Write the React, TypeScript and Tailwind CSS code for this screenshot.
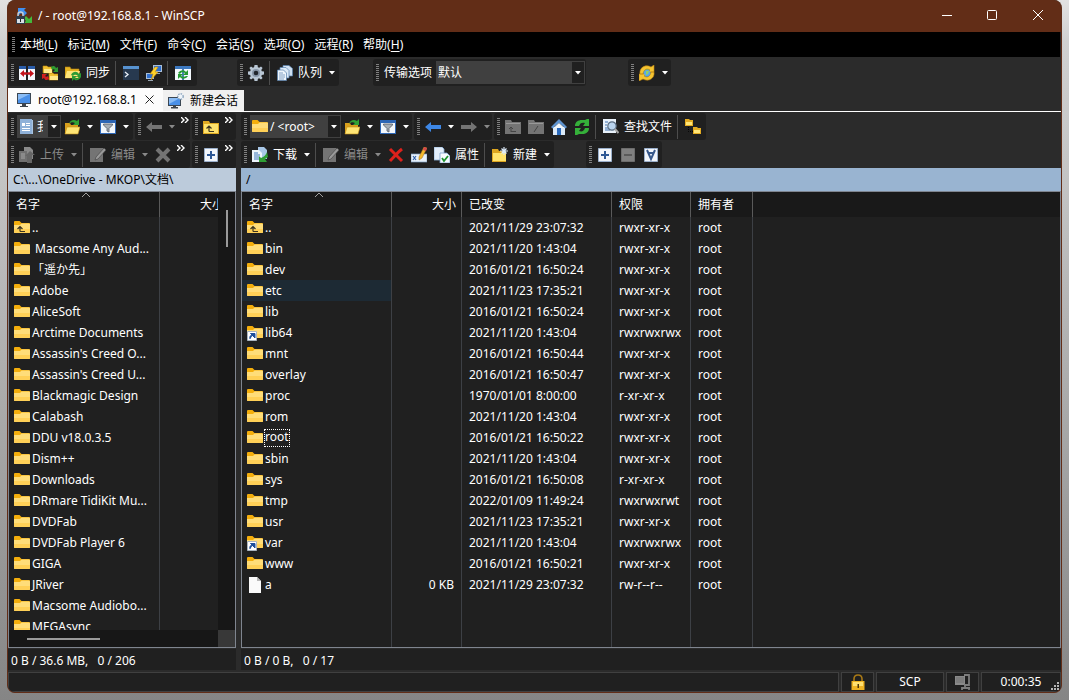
import type { ReactNode } from "react";

const localFiles = [
  "..",
  " Macsome Any Aud...",
  "「遥か先」",
  "Adobe",
  "AliceSoft",
  "Arctime Documents",
  "Assassin's Creed O...",
  "Assassin's Creed U...",
  "Blackmagic Design",
  "Calabash",
  "DDU v18.0.3.5",
  "Dism++",
  "Downloads",
  "DRmare TidiKit Mu...",
  "DVDFab",
  "DVDFab Player 6",
  "GIGA",
  "JRiver",
  "Macsome Audiobo...",
  "MEGAsync",
];

// name, size, changed, rights
const remoteFiles = [
  ["..", "", "2021/11/29 23:07:32", "rwxr-xr-x"],
  ["bin", "", "2021/11/20 1:43:04", "rwxr-xr-x"],
  ["dev", "", "2016/01/21 16:50:24", "rwxr-xr-x"],
  ["etc", "", "2021/11/23 17:35:21", "rwxr-xr-x"],
  ["lib", "", "2016/01/21 16:50:24", "rwxr-xr-x"],
  ["lib64", "", "2021/11/20 1:43:04", "rwxrwxrwx"],
  ["mnt", "", "2016/01/21 16:50:44", "rwxr-xr-x"],
  ["overlay", "", "2016/01/21 16:50:47", "rwxr-xr-x"],
  ["proc", "", "1970/01/01 8:00:00", "r-xr-xr-x"],
  ["rom", "", "2021/11/20 1:43:04", "rwxr-xr-x"],
  ["root", "", "2016/01/21 16:50:22", "rwxr-xr-x"],
  ["sbin", "", "2021/11/20 1:43:04", "rwxr-xr-x"],
  ["sys", "", "2016/01/21 16:50:08", "r-xr-xr-x"],
  ["tmp", "", "2022/01/09 11:49:24", "rwxrwxrwt"],
  ["usr", "", "2021/11/23 17:35:21", "rwxr-xr-x"],
  ["var", "", "2021/11/20 1:43:04", "rwxrwxrwx"],
  ["www", "", "2016/01/21 16:50:21", "rwxr-xr-x"],
  ["a", "0 KB", "2021/11/29 23:07:32", "rw-r--r--"],
];

const menus = [
  ["本地", "L"],
  ["标记", "M"],
  ["文件", "F"],
  ["命令", "C"],
  ["会话", "S"],
  ["选项", "O"],
  ["远程", "R"],
  ["帮助", "H"],
];

const icons: Record<string, ReactNode> = {
  compare: (
    <>
      <path d="M0 1h7v14H0zM9 1h7v14H9z" fill="#f4f8fd" />
      <path d="M0 1h7v3H0zM9 1h7v3H9z" fill="#2a5ca8" />
      <path d="M1 8.500l4-3.500v2.500h2v2H5V12zM15 8.500L11 5v2.500H9v2h2V12z" fill="#c4121c" />
      <path d="M5 7.500h6v2H5z" fill="#c4121c" />
    </>
  ),
  mirror: (
    <>
      <path d="M1 1h4l1 1h4v6H1zM7 8h4l1 1h4v6H7z" fill="#f0c030" stroke="#c08a10" strokeWidth=".6" />
      <path d="M2 4h8v4H2zM8 11h8v4H8z" fill="#ffe987" />
      <path d="M9 2c3-2 4-1 5 1l2-1v5h-5l2-2c-1-1-2-1-3 0z" fill="#2f9a30" />
      <path d="M7 14c-3 2-4 1-5-1l-2 1V9h5l-2 2c1 1 2 1 3 0z" fill="#d02020" />
    </>
  ),
  sync: (
    <>
      <path d="M0 2h5l1 2h8v9H0z" fill="#e6b422" stroke="#b98512" strokeWidth=".6" />
      <path d="M2 6h13l-2 7H0z" fill="#ffe579" />
      <path d="M6 10c2-4 6-4 8-1l2-1v4h-5l2-1c-2-2-4-1-5 0zM16 12c-2 4-6 4-7 2l-2 2v-5h5l-2 2c2 1 3 0 4-1z" fill="#2c9b35" />
    </>
  ),
  terminal: (
    <>
      <path d="M0 1h16v14H0z" fill="#27394f" />
      <path d="M0 1h16v3H0z" fill="#5792cf" />
      <path d="M2 7l3 2.500L2 12" fill="none" stroke="#e8eef6" strokeWidth="1.300" />
    </>
  ),
  putty: (
    <>
      <path d="M7 0h9v7H7zM0 8h8v6H0z" fill="#a8bfd8" />
      <path d="M8 1h7v5H8zM1 9h6v4H1z" fill="#2f6fcf" />
      <path d="M10 8h4v1h-4zM2 15h5v1H2z" fill="#9aa6b3" />
      <path d="M9 2L4 9h3l-2 6 7-8H9l3-5z" fill="#ffd42a" stroke="#c18a10" strokeWidth=".6" />
    </>
  ),
  keep: (
    <>
      <path d="M0 1h16v14H0z" fill="#f3f8fd" />
      <path d="M0 1h16v3H0z" fill="#3c78bf" />
      <path d="M7 4h2v11H7z" fill="#4a7fbd" />
      <path d="M3 8c2-3 6-4 8-1l2-2v5H8l2-2C8 7 6 7 5 9zM13 11c-2 3-6 4-8 1l-2 2V9h5l-2 2c2 1 4 1 5 0z" fill="#259a32" />
    </>
  ),
  gear: (
    <>
      <path d="M6.500 0h3l.4 2.200 1.300.6L13 1.400 14.600 3l-1.300 1.900.5 1.300 2.200.4v2.800l-2.200.5-.5 1.300 1.300 1.800-1.600 1.600-1.800-1.300-1.300.5-.4 2.200h-3l-.4-2.200-1.300-.5L3 14.600 1.400 13l1.300-1.800-.5-1.300L0 9.400V6.600l2.200-.4.5-1.300L1.400 3 3 1.400l1.800 1.400 1.300-.6z" fill="#b8c6d4" />
      <circle cx="8" cy="8" r="4" fill="#8796a8" />
      <circle cx="8" cy="8" r="2.300" fill="#20252c" />
    </>
  ),
  queue: (
    <g stroke="#5680ad" strokeWidth=".7">
      <path d="M6 .5h6l3.500 3V11H6z" fill="#cfe0f2" />
      <path d="M3 2.500h6l3 3V13H3z" fill="#dceaf7" />
      <path d="M.5 5h6l3 3v7.500h-9z" fill="#eef6fd" />
      <path d="M2 8h4M2 10h6M2 12h6M2 14h5" />
    </g>
  ),
  globe: (
    <>
      <circle cx="8" cy="8" r="6.500" fill="#3f8fe0" />
      <path d="M6 5l3-1 2 3-3 2-2 3-1-3z" fill="#7ec95b" />
      <path d="M1 9C0 2 7-1 12 2l3-2v7H9l2-2C8 3 5 4 4 9zM15 7c1 7-6 10-11 7l-4 2V9h7l-2 2c3 2 6 1 7-4z" fill="#f5c431" stroke="#bd8512" strokeWidth=".6" />
      <circle cx="8" cy="8" r="3" fill="#5aa6ec" />
      <path d="M7 6l3 0-1 3-2 1z" fill="#8fd06b" />
    </>
  ),
  monitor: (
    <>
      <path d="M1 1h14v11H1z" fill="#3b4754" />
      <path d="M2 2h12v9H2z" fill="#4a90e8" />
      <path d="M2 2h12L2 8z" fill="#8abcf5" />
      <path d="M6 12h4v2h2v1H4v-1h2z" fill="#3d444c" />
    </>
  ),
  newSession: (
    <>
      <path d="M0 4h13v9H0z" fill="#3b4754" />
      <path d="M1 5h11v7H1z" fill="#4a90e8" />
      <path d="M1 5h11L1 11z" fill="#8abcf5" />
      <path d="M5 13h3v1h2v1.500H3V14h2z" fill="#3d444c" />
      <circle cx="12.500" cy="3.500" r="2.700" fill="#eef4fa" stroke="#8ba4bd" strokeDasharray="1.500 1" strokeWidth="1.400" />
    </>
  ),
  docs: (
    <>
      <path d="M2 1h12v14H2z" fill="#a9c4e2" />
      <path d="M1 0h12v15H1z" fill="#8fb1d8" />
      <path d="M3 4h3v3H3zM7 4h4v1H7zM7 6h4v1H7zM3 9h8v1H3zM3 11h8v1H3z" fill="#fff" />
    </>
  ),
  open: (
    <>
      <path d="M1 4h5l1 2h7v9H1z" fill="#d99f1c" />
      <path d="M3 8h13l-2 7H1z" fill="#ffe574" stroke="#c58f18" strokeWidth=".6" />
      <path d="M5 5c1-4 5-5 8-3l2-2v6H9l2-2C9 3 7 3 5 5z" fill="#31a034" />
    </>
  ),
  filter: (
    <>
      <path d="M0 1h16v14H0z" fill="#2d66b5" />
      <path d="M1 4h14v10H1z" fill="#f2f7fc" />
      <path d="M3.500 5h9v1L9 9.500V13l-2-1V9.500L3.500 6z" fill="#a7aeb6" stroke="#50575f" strokeWidth=".8" />
    </>
  ),
  back: <path d="M0 8l6-5v3h10v4H6v3z" fill="#3d87e6" />,
  backOff: <path d="M0 8l6-5v3h10v4H6v3z" fill="#747474" />,
  forward: <path d="M16 8l-6-5v3H0v4h10v3z" fill="#747474" />,
  parent: (
    <>
      <path d="M0 2h6l1 2h9v11H0z" fill="#e0aa23" />
      <path d="M1 5h14v9H1z" fill="#ffe36c" />
      <path d="M6 12.500V8M3.500 9.500L6 7l2.500 2.500M6 12.500h5" fill="none" stroke="#3b3420" strokeWidth="1.200" />
    </>
  ),
  parentOff: (
    <>
      <path d="M0 1h6l1 2h9v12H0z" fill="#747474" />
      <path d="M1 4.500h14" stroke="#999" />
      <path d="M6 13V8M4 10l2-2 2 2M6 12.500h5" fill="none" stroke="#444" />
    </>
  ),
  rootOff: (
    <>
      <path d="M0 1h6l1 2h9v12H0z" fill="#747474" />
      <path d="M1 4.500h14" stroke="#999" />
      <path d="M6 13l4-6" stroke="#444" />
    </>
  ),
  home: (
    <>
      <path d="M2 8h12v8H2z" fill="#dceaf8" />
      <path d="M8 0l8 8-1.500 1.500L8 4 1.500 9.500 0 8z" fill="#5e93cf" />
      <path d="M8 4l5 4.500V9H3v-.5z" fill="#eff6fc" />
      <path d="M6 9h4v7H6z" fill="#2869bd" />
    </>
  ),
  refresh: (
    <path d="M1 7C1 3 4 1 8 1h3l2-1h2v7H9l2-3C8 3 6 4 5 7zM15 9c0 4-3 6-7 6H5l-2 1H1V9h6l-2 3c3 1 5 0 6-3z" fill="#35b03a" />
  ),
  find: (
    <>
      <path d="M0 0h13v14H0z" fill="#e8f1fa" />
      <path d="M2 3h3M2 6h2M2 9h3M2 11h5" stroke="#3d71ad" strokeWidth="1.200" />
      <circle cx="9" cy="7" r="4.200" fill="#b9d4ee" stroke="#5c6f83" strokeWidth="1.200" />
      <path d="M12 10l3.500 4" stroke="#a8a8a8" strokeWidth="2" />
    </>
  ),
  tree: (
    <>
      <path d="M0 0h4l1 1h3v6H0zM8 8h4l1 1h3v6H8z" fill="#e4ac22" />
      <path d="M1 3h6v3H1zM9 11h6v3H9z" fill="#ffe678" />
      <path d="M3.500 8v4.500H8" fill="none" stroke="#000" strokeDasharray="1 1" />
    </>
  ),
  upload: (
    <>
      <path d="M5 0h6l3 3v9H5z" fill="#8a8a8a" />
      <path d="M0 4h8v11H0z" fill="#707070" />
      <path d="M2 7h4M2 9h4M2 11h4" stroke="#a5a5a5" />
      <path d="M8 16V9H6l5-5 5 4h-3v8z" fill="#666" />
    </>
  ),
  download: (
    <>
      <path d="M6 0h6l3 3v9H6z" fill="#a9c8e8" />
      <path d="M0 3h7l3 3v9H0z" fill="#edf5fc" />
      <path d="M2 6h4M2 8h6M2 10h5M2 12h5" stroke="#3d78bd" />
      <path d="M15 5l1 5-3 2 2 3H7V9l2 2c3-1 5-3 6-6z" fill="#2f9f36" />
    </>
  ),
  editOff: (
    <>
      <path d="M0 1h13v14H0z" fill="#747474" />
      <path d="M14 1l2 2-8 9-3 1 1-3z" fill="#999" stroke="#4a4a4a" strokeWidth=".7" />
    </>
  ),
  deleteOff: <path d="M2 2l12 12M14 2L2 14" stroke="#737373" strokeWidth="4" />,
  delete: <path d="M2 2c4 4 8 8 12 12M14 2C10 5 6 10 2 14" fill="none" stroke="#dc211c" strokeWidth="3" />,
  rename: (
    <>
      <path d="M0 7h16v8H0z" fill="#e8f1fa" stroke="#7fa0c4" strokeWidth=".7" />
      <path d="M2 9l3 4M5 9l-3 4" stroke="#2f5fa8" strokeWidth="1.200" />
      <path d="M13 0l3 1-5 10-3 2v-3z" fill="#f4b92b" stroke="#a36d14" strokeWidth=".5" />
      <path d="M13 0l3 1-1 3-3-1z" fill="#d6474d" />
    </>
  ),
  props: (
    <>
      <path d="M0 0h8l2 2v11H0z" fill="#e3eefa" stroke="#8aaed5" strokeWidth=".8" />
      <path d="M6 6h7l3 3v7H6z" fill="#f8fbff" stroke="#7aa0ca" strokeWidth=".8" />
      <path d="M8 11l2 3 4-5" fill="none" stroke="#1f9430" strokeWidth="1.800" />
    </>
  ),
  newFolder: (
    <>
      <path d="M0 2h6l1 2h7v11H0z" fill="#dda51f" />
      <path d="M1 6h13v8H1z" fill="#ffe26a" />
      <path d="M12 0v8M8 4h8M9.500 1.500l5 5M14.500 1.500l-5 5" stroke="#dceaf8" strokeWidth="1.200" />
    </>
  ),
  plus: (
    <>
      <path d="M1.500 1.500h13v13h-13z" fill="#f2f6fc" stroke="#9bb0cc" />
      <path d="M8 4v8M4 8h8" stroke="#2d5896" strokeWidth="2" />
    </>
  ),
  minusOff: (
    <>
      <path d="M1.500 1.500h13v13h-13z" fill="#808080" stroke="#6d6d6d" />
      <path d="M4 8h8" stroke="#5a5a5a" strokeWidth="2" />
    </>
  ),
  selectFilter: (
    <>
      <path d="M1.500 1.500h13v13h-13z" fill="#f2f6fc" stroke="#9bb0cc" />
      <path d="M4 3l4 9 4-9M5 6h6" fill="none" stroke="#38598c" strokeWidth="2" />
    </>
  ),
  folder: (
    <>
      <path d="M0 2q0-1 1-1h4.500l2 2H15q1 0 1 1v2H0z" fill="#f4ae0c" />
      <path d="M0 5h6l1.500-1.500H15q1 0 1 1V12q0 1-1 1H1q-1 0-1-1z" fill="#ffdd79" />
      <path d="M0 9h16v3q0 1-1 1H1q-1 0-1-1z" fill="#ffd057" />
    </>
  ),
  app: (
    <>
      <path d="M2 0h8L8 2l3 3-3 3-3-3-3 3z" fill="#3f8ff0" />
      <path d="M16 15H8l2-2-2-3 2-2 3 3 3-3z" fill="#43b83c" />
      <path d="M2 9V6q0-2 2.500-2T7 6v3" fill="none" stroke="#c9cfd6" strokeWidth="1.500" />
      <path d="M0 8h9v8H0z" fill="#303b4a" />
      <path d="M1 11h7v4H1z" fill="#d9dee4" />
      <path d="M4 11h1v3H4z" fill="#222" />
    </>
  ),
  lock: (
    <>
      <path d="M4 8V5q0-4 4-4t4 4v3" fill="none" stroke="#a87916" strokeWidth="1.600" />
      <path d="M1.500 7h13v9h-13z" fill="#efb323" />
      <path d="M3 8h10v4H3z" fill="#ffe070" />
      <path d="M7.500 10h1.500v4H7.500z" fill="#4d3508" />
    </>
  ),
  compress: (
    <>
      <path d="M0 2h10v9H0z" fill="#8a8a8a" />
      <path d="M1 4h8M1 6h8M1 8h8" stroke="#707070" />
      <path d="M9 1h5v10h-5M10 11v4M7 14h8M7 13v3M14 13v3" fill="none" stroke="#7c7c7c" strokeWidth="1.800" />
    </>
  ),
};

function Icon({ name }: { name: string }) {
  return (
    <svg className="h-4 w-4 shrink-0" viewBox="0 0 16 16" aria-hidden="true">
      {icons[name]}
    </svg>
  );
}

function Arrow() {
  return (
    <svg className="h-1 w-[6px] shrink-0" viewBox="0 0 6 4" aria-hidden="true">
      <path d="M0 0h6L3 3.500z" fill="currentColor" />
    </svg>
  );
}

function Band({ children, className = "" }: { children: ReactNode; className?: string }) {
  return (
    <div className={`flex h-[27px] shrink-0 items-center gap-[7px] overflow-hidden rounded-[3px] bg-[#202020] pr-1 pl-[3px] ${className}`}>
      <span className="-mr-[2px] h-[18px] w-[3px] shrink-0 bg-[repeating-linear-gradient(#808080_0_1px,transparent_1px_2px)]" />
      {children}
    </div>
  );
}

type ToolProps = { icon: string; text?: string; arrow?: boolean; off?: boolean; title?: string };

function Tool({ icon, text, arrow, off, title }: ToolProps) {
  return (
    <button
      type="button"
      disabled={off}
      aria-label={text || title || icon}
      className={`flex h-6 shrink-0 items-center ${off ? "text-[#8a8a8a]" : "text-white"}`}
    >
      <Icon name={icon} />
      {text && <span className="pl-[5px] whitespace-nowrap">{text}</span>}
      {arrow && (
        <span className="pl-[7px]">
          <Arrow />
        </span>
      )}
    </button>
  );
}

function Sep() {
  return <span className="-ml-[2px] h-6 w-px shrink-0 bg-[#4d4d4d]" />;
}

function More() {
  return (
    <button type="button" aria-label="more" className="-ml-px h-[14px] w-2 shrink-0 self-start">
      <svg className="h-[6px] w-2" viewBox="0 0 8 6">
        <path d="M0 0l3 3-3 3M4 0l3 3-3 3" fill="none" stroke="#fff" strokeWidth="1.400" />
      </svg>
    </button>
  );
}

function Combo({ icon, value, label, className = "" }: { icon?: string; value: string; label: string; className?: string }) {
  return (
    <div className={`flex h-[23px] shrink-0 items-center bg-[#404040] ${className}`}>
      {icon && (
        <span className="pl-[2px]">
          <Icon name={icon} />
        </span>
      )}
      <div className="relative h-full min-w-0 flex-1">
        <select aria-label={label} className="h-full w-full appearance-none bg-transparent pr-[18px] pl-[2px] text-white outline-none">
          <option>{value}</option>
        </select>
        <span className="pointer-events-none absolute inset-y-px right-px flex w-3 items-center justify-center bg-[#202020]">
          <Arrow />
        </span>
      </div>
    </div>
  );
}

function FileIcon({ name }: { name: string }) {
  if (name === "a")
    return (
      <svg className="h-4 w-4 shrink-0" viewBox="0 0 16 16">
        <path d="M2 0h8l4 4v12H2z" fill="#fafafa" />
        <path d="M10 0l4 4h-4z" fill="#b9b9b9" />
      </svg>
    );
  return (
    <svg className="h-4 w-4 shrink-0" viewBox="0 0 16 16">
      {icons.folder}
      {name === ".." && (
        <path d="M6 11.500V7M3.500 9L6 6.500 8.500 9M6 11.500h5" fill="none" stroke="#3b3420" strokeWidth="1.200" />
      )}
      {(name === "lib64" || name === "var") && (
        <>
          <path d="M.5 6.500h9v9h-9z" fill="#fff" stroke="#a9b4c0" />
          <path d="M3 14q-1-4 3-4M3.500 8.500H8V13z" fill="#1c4f9c" stroke="#1c4f9c" />
        </>
      )}
    </svg>
  );
}

function SortMark() {
  return (
    <svg className="absolute top-0 left-1/2 -ml-[3px] h-[6px] w-[10px]" viewBox="0 0 10 6">
      <path d="M1 5l4-4 4 4" fill="none" stroke="#a0a0a0" />
    </svg>
  );
}

function LocalPanel() {
  return (
    <section className="flex w-[228px] shrink-0 flex-col">
      <div className="h-[23px] truncate bg-[#bccbdb] px-[5px] leading-[23px] text-black">C:\...\OneDrive - MKOP\文档\</div>
      <div className="flex min-h-0 flex-1 flex-col border border-[#7f858f] bg-[#202020]">
        <div className="flex min-h-0 flex-1">
          <div className="min-w-0 flex-1 overflow-hidden">
            <table className="w-[240px] table-fixed border-separate border-spacing-0">
              <thead>
                <tr className="h-[25px] bg-[#191919]">
                  <th className="relative w-[151px] border-r border-[#5a5a5a] p-0 pl-[7px] text-left font-normal">
                    名字
                    <SortMark />
                  </th>
                  <th className="p-0 pl-10 text-left font-normal">大小</th>
                </tr>
              </thead>
              <tbody>
                {localFiles.map((name) => (
                  <tr key={name} className="h-[21px]">
                    <td className="border-r border-[#3d4045] p-0 pl-[5px]">
                      <div className="flex h-[21px] items-center gap-[2px] overflow-hidden whitespace-pre">
                        <FileIcon name={name} />
                        {name}
                      </div>
                    </td>
                    <td />
                  </tr>
                ))}
              </tbody>
            </table>
          </div>
          <div className="flex w-[17px] shrink-0 justify-center bg-[#171717] pt-[18px]">
            <div className="h-[37px] w-[2px] bg-[#9a9a9a]" />
          </div>
        </div>
        <div className="flex h-[17px] shrink-0 items-center bg-[#171717] pl-[18px]">
          <div className="h-[2px] w-[73px] bg-[#9a9a9a]" />
          <div className="ml-auto h-full w-[17px] bg-[#383838]" />
        </div>
      </div>
      <div className="mt-px h-[21px] bg-[#202020] px-[3px] leading-6 whitespace-pre">0 B / 36.6 MB,   0 / 206</div>
    </section>
  );
}

function RemotePanel() {
  return (
    <section className="flex min-w-0 flex-1 flex-col">
      <div className="h-[23px] truncate bg-[#99b4d1] px-[5px] leading-[23px] text-black">/</div>
      <div className="min-h-0 flex-1 border border-[#7f858f] bg-[#202020]">
        <table className="h-full w-full table-fixed border-separate border-spacing-0 whitespace-nowrap">
          <thead>
            <tr className="h-[25px] bg-[#191919] text-left [&>th]:border-r [&>th]:border-[#5a5a5a] [&>th]:p-0 [&>th]:font-normal">
              <th className="relative w-[150px] pl-[7px]!">
                <span className="block">名字</span>
                <SortMark />
              </th>
              <th className="w-[70px] pr-[5px]! text-right">大小</th>
              <th className="w-[150px] pl-[7px]!">已改变</th>
              <th className="w-[79px] pl-[7px]!">权限</th>
              <th className="w-[62px] pl-[7px]!">拥有者</th>
              <th className="border-r-0!" />
            </tr>
          </thead>
          <tbody className="[&_td]:border-r [&_td]:border-[#3d4045] [&_td]:p-0 [&_td:last-child]:border-r-0">
            {remoteFiles.map(([name, size, changed, rights]) => (
              <tr key={name} className="h-[21px]">
                <td className={name === "etc" ? "bg-[#1d2a34]" : ""}>
                  <div className="flex h-[21px] items-center pl-[5px]">
                    <FileIcon name={name} />
                    <span className={name === "root" ? "ml-px h-[18px] px-px leading-4 outline outline-dotted -outline-offset-1 outline-white" : "pl-[2px]"}>{name}</span>
                  </div>
                </td>
                <td className="pr-[7px]! text-right">{size}</td>
                <td className="pl-[7px]!">{changed}</td>
                <td className="pl-[7px]!">{rights}</td>
                <td className="pl-[7px]!">root</td>
                <td />
              </tr>
            ))}
            <tr>
              <td />
              <td />
              <td />
              <td />
              <td />
              <td />
            </tr>
          </tbody>
        </table>
      </div>
      <div className="mt-px h-[21px] bg-[#202020] px-[3px] leading-6 whitespace-pre">0 B / 0 B,   0 / 17</div>
    </section>
  );
}

export default function App() {
  return (
    <div className="flex h-screen bg-[linear-gradient(#e2e2e2_0,#d0d0d0_6%,#c4c4c4_25%,#a8a8a8_60%,#858585)] px-[7px] pb-[7px] font-['Noto_Sans','Noto_Sans_CJK_SC',sans-serif] text-[12px] leading-4 text-white">
      <div className="flex min-w-0 flex-1 flex-col overflow-hidden rounded-lg border border-t-0 border-[#622d17] bg-[#2b2b2b]">
        <header className="flex h-8 shrink-0 items-center bg-[#622d17] pl-2">
          <Icon name="app" />
          <h1 className="flex-1 truncate pl-[6px]">/ - root@192.168.8.1 - WinSCP</h1>
          <button type="button" aria-label="Minimize" className="flex w-[45px] justify-center">
            <svg className="h-3 w-3" viewBox="0 0 12 12">
              <path d="M1 5.500h10" stroke="#fff" />
            </svg>
          </button>
          <button type="button" aria-label="Maximize" className="flex w-[45px] justify-center">
            <svg className="h-3 w-3" viewBox="0 0 12 12">
              <rect x="1.500" y=".5" width="9" height="9" rx="1" fill="none" stroke="#fff" />
            </svg>
          </button>
          <button type="button" aria-label="Close" className="flex w-[47px] justify-center">
            <svg className="h-3 w-3" viewBox="0 0 12 12">
              <path d="M1 0l10 10M11 0L1 10" stroke="#fff" />
            </svg>
          </button>
        </header>

        <nav className="mr-px flex h-[25px] shrink-0 items-center gap-[10px] bg-black pl-1">
          <span className="-mr-[5px] h-4 w-[3px] bg-[repeating-linear-gradient(#808080_0_1px,transparent_1px_2px)]" />
          {menus.map(([name, key]) => (
            <button key={key} type="button">
              {name}(<span className="underline underline-offset-2">{key}</span>)
            </button>
          ))}
        </nav>

        <div className="flex h-[31px] shrink-0 items-center">
          <Band className="w-[189px]">
            <Tool icon="compare" title="比较" />
            <Tool icon="mirror" title="镜像" />
            <Tool icon="sync" text="同步" />
            <Sep />
            <Tool icon="terminal" title="控制台" />
            <Tool icon="putty" title="PuTTY" />
            <Sep />
            <Tool icon="keep" title="保持更新" />
          </Band>
          <Band className="ml-10 w-[102px]">
            <Tool icon="gear" title="选项" />
            <Sep />
            <Tool icon="queue" text="队列" arrow />
          </Band>
          <Band className="ml-[34px] w-[213px] pr-px!">
            <label htmlFor="transfer" className="-mr-[3px] whitespace-nowrap">传输选项</label>
            <div className="relative h-[23px] flex-1">
              <select id="transfer" className="h-full w-full appearance-none bg-[#404040] pl-[2px] text-white outline-none">
                <option>默认</option>
              </select>
              <span className="pointer-events-none absolute inset-y-px right-px flex w-3 items-center justify-center bg-[#202020]">
                <Arrow />
              </span>
            </div>
          </Band>
          <Band className="ml-[42px] w-[43px]">
            <Tool icon="globe" title="同步浏览" arrow />
          </Band>
        </div>

        <div className="flex h-6 shrink-0 items-end border-b border-white text-black">
          <button type="button" className="flex h-[23px] w-[155px] items-center gap-[6px] bg-[#fcfcfc] pr-[9px] pl-2">
            <Icon name="monitor" />
            <span>root@192.168.8.1</span>
            <svg className="ml-auto h-[9px] w-[9px]" viewBox="0 0 9 9">
              <path d="M.5.500l8 8M8.500.500l-8 8" stroke="#222" />
            </svg>
          </button>
          <button type="button" className="flex h-[21px] w-[81px] items-center gap-[6px] bg-[#f0f0f0] pl-[5px]">
            <Icon name="newSession" />
            <span>新建会话</span>
          </button>
        </div>

        <div className="flex shrink-0 pt-px">
          <div className="flex w-[228px] shrink-0 flex-col gap-px">
            <div className="flex gap-[2px]">
              <Band className="w-[125px]">
                <Combo icon="docs" value="我的文档" label="驱动器" className="-ml-[2px] w-11" />
                <span className="-ml-1 flex gap-[7px]">
                  <Tool icon="open" title="打开目录" arrow />
                  <Tool icon="filter" title="过滤" arrow />
                </span>
              </Band>
              <Band className="w-[55px]">
                <Tool icon="backOff" title="后退" arrow off />
                <More />
              </Band>
              <Band className="w-[44px]">
                <Tool icon="parent" title="上级目录" />
                <More />
              </Band>
            </div>
            <div className="flex gap-[2px]">
              <Band className="w-[182px]">
                <Tool icon="upload" text="上传" arrow off />
                <Sep />
                <Tool icon="editOff" text="编辑" arrow off />
                <Tool icon="deleteOff" title="删除" off />
                <More />
              </Band>
              <Band className="w-[44px]">
                <Tool icon="plus" title="选择" />
                <More />
              </Band>
            </div>
          </div>
          <div className="ml-[5px] flex min-w-0 flex-1 flex-col gap-px">
            <div className="flex gap-[2px]">
              <Band className="w-[171px]">
                <Combo icon="folder" value="/ <root>" label="远程目录" className="-ml-[2px] w-[91px]" />
                <span className="-ml-1 flex gap-[7px]">
                  <Tool icon="open" title="打开目录" arrow />
                  <Tool icon="filter" title="过滤" arrow />
                </span>
              </Band>
              <Band className="w-[78px]">
                <Tool icon="back" title="后退" arrow />
                <Tool icon="forward" title="前进" arrow off />
              </Band>
              <Band className="w-[212px]">
                <Tool icon="parentOff" title="上级目录" off />
                <Tool icon="rootOff" title="根目录" off />
                <Tool icon="home" title="主目录" />
                <Tool icon="refresh" title="刷新" />
                <Sep />
                <Tool icon="find" text="查找文件" />
                <Sep />
                <Tool icon="tree" title="目录树" />
              </Band>
            </div>
            <div className="flex gap-8">
              <Band className="w-[313px]">
                <Tool icon="download" text="下载" arrow />
                <Sep />
                <Tool icon="editOff" text="编辑" arrow off />
                <Tool icon="delete" title="删除" />
                <Tool icon="rename" title="重命名" />
                <Tool icon="props" text="属性" />
                <Sep />
                <Tool icon="newFolder" text="新建" arrow />
              </Band>
              <Band className="w-[76px]">
                <Tool icon="plus" title="选择" />
                <Tool icon="minusOff" title="取消选择" off />
                <Tool icon="selectFilter" title="反选" />
              </Band>
            </div>
          </div>
        </div>

        <main className="flex min-h-0 flex-1 gap-[5px]">
          <LocalPanel />
          <RemotePanel />
        </main>

        <footer className="mt-[2px] flex h-5 shrink-0 gap-[2px] text-center leading-[18px]">
          <div className="flex-1 border border-[#404040] bg-[#202020]" />
          <div className="flex w-[33px] items-center justify-center border border-[#404040] bg-[#202020]">
            <Icon name="lock" />
          </div>
          <div className="w-[68px] border border-[#404040] bg-[#202020]">SCP</div>
          <div className="flex w-[33px] items-center justify-center border border-[#404040] bg-[#202020]">
            <Icon name="compress" />
          </div>
          <div className="relative w-20 border border-[#404040] bg-[#202020]">
            0:00:35
            <svg className="absolute right-px bottom-px h-2 w-2" viewBox="0 0 8 8">
              <path d="M6 0h2v2H6zM3 3h2v2H3zM6 3h2v2H6zM0 6h2v2H0zM3 6h2v2H3zM6 6h2v2H6z" fill="#b5b5b5" />
            </svg>
          </div>
        </footer>
      </div>
    </div>
  );
}
